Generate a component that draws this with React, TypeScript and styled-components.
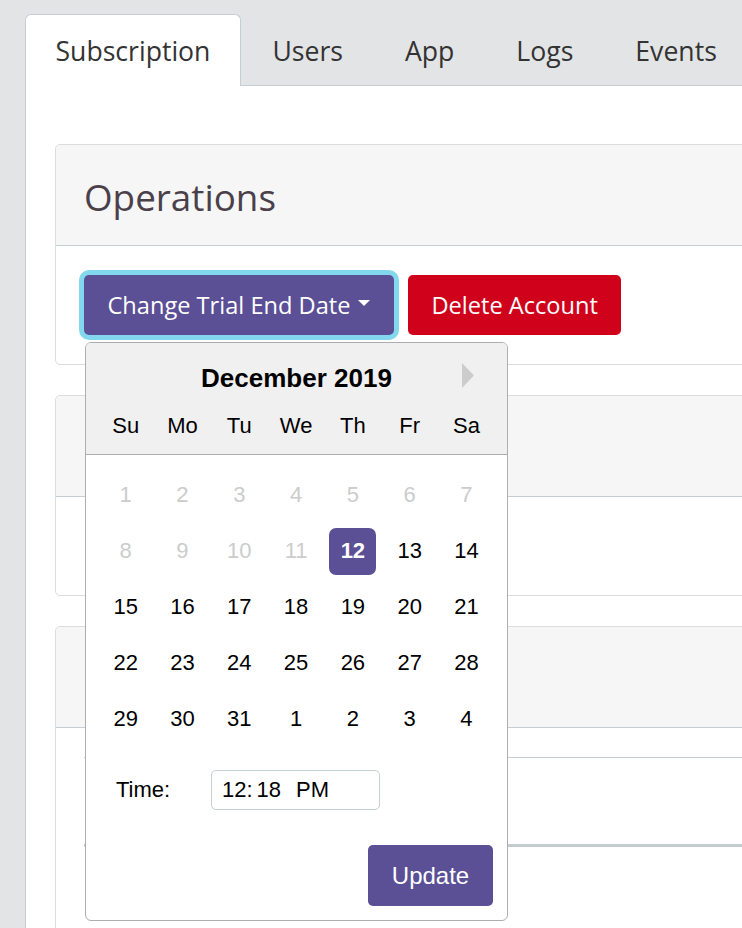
import React from 'react';
import styled, { createGlobalStyle } from 'styled-components';

const GlobalStyle = createGlobalStyle`
  html, body { margin: 0; padding: 0; }
  body {
    background: #e3e4e6;
    overflow: hidden;
    font-family: "Open Sans", "Noto Sans", sans-serif;
  }
  * { box-sizing: border-box; }
`;

const Page = styled.div`
  padding: 14px 0 0 25px;
  height: 928px;
  display: flex;
  flex-direction: column;
`;

const TabBar = styled.nav`
  display: flex;
  gap: 1px;
  height: 71px;
  position: relative;
  z-index: 1;
`;

const Tab = styled.div<{ $active?: boolean }>`
  display: flex;
  align-items: center;
  height: 72px;
  padding: 0 29.5px;
  font-size: 26.6px;
  color: #333;
  border: 1px solid ${(p) => (p.$active ? '#c6ced3' : 'transparent')};
  border-bottom: none;
  border-radius: 6px 6px 0 0;
  background: ${(p) => (p.$active ? '#fff' : 'transparent')};
`;

const Panel = styled.main`
  flex: 1;
  background: #fff;
  border-top: 1px solid #c6ced3;
  border-left: 1px solid #c6ced3;
  padding: 58px 0 0 29px;
`;

const Card = styled.section<{ $raised?: boolean }>`
  position: relative;
  z-index: ${(p) => (p.$raised ? 2 : 'auto')};
  width: calc(100% + 40px);
  border: 1px solid #dcdcdc;
  border-radius: 5px;
  margin-bottom: 30px;
  background: #fff;
`;

const CardHeader = styled.header`
  height: 101px;
  background: #f6f6f6;
  border-bottom: 1px solid #c6ced3;
  border-radius: 5px 5px 0 0;
  padding: 3px 28px 0;
  display: flex;
  align-items: center;
  font-size: 36.8px;
  color: #4a4049;
`;

const CardBody = styled.div<{ $minHeight?: number }>`
  padding: 29px 28px;
  min-height: ${(p) => (p.$minHeight ? `${p.$minHeight}px` : 'auto')};
`;

const ButtonRow = styled.div`
  display: flex;
  gap: 14px;
`;

const DropdownWrap = styled.div`
  position: relative;
`;

const Button = styled.button<{ $variant: 'primary' | 'danger'; $focused?: boolean }>`
  display: inline-flex;
  align-items: center;
  height: 60px;
  padding: 0 23.5px;
  border: none;
  border-radius: 5px;
  font-family: "Open Sans", "Noto Sans", sans-serif;
  font-size: 23.6px;
  color: #fff;
  background: ${(p) => (p.$variant === 'primary' ? '#5b4f96' : '#d0021b')};
  box-shadow: ${(p) => (p.$focused ? '0 0 0 5px #82d9ee' : 'none')};
  cursor: pointer;
`;

const Caret = styled.span`
  display: inline-block;
  width: 0;
  height: 0;
  margin-left: 8px;
  margin-bottom: 5px;
  border-top: 6px solid #fff;
  border-left: 6px solid transparent;
  border-right: 6px solid transparent;
`;

const Table = styled.div`
  border-top: 1px solid #c6ced3;
`;

const TableHead = styled.div`
  height: 89px;
  border-bottom: 3px solid #c3cbcf;
`;

/* ---------- Datepicker ---------- */

const Calendar = styled.div`
  position: absolute;
  top: calc(100% + 7px);
  left: 1px;
  width: 423px;
  background: #fff;
  border: 1px solid #aeaeae;
  border-radius: 6px;
  font-family: "Liberation Sans", Arial, sans-serif;
  color: #000;
  z-index: 10;
`;

const CalHeader = styled.div`
  position: relative;
  background: #f0f0f0;
  border-bottom: 1px solid #aeaeae;
  border-radius: 5px 5px 0 0;
  padding-top: 20px;
`;

const MonthTitle = styled.div`
  text-align: center;
  font-weight: bold;
  font-size: 26px;
  line-height: 30px;
  margin-bottom: 4px;
`;

const NextArrow = styled.svg`
  position: absolute;
  top: 20px;
  right: 33px;
`;

const DayGrid = styled.div`
  display: grid;
  grid-template-columns: repeat(7, 56.8px);
  padding: 0 11.3px;
`;

const Weeks = styled(DayGrid)`
  padding-top: 12px;
`;

const DayName = styled.div`
  height: 57px;
  display: flex;
  align-items: center;
  justify-content: center;
  font-size: 22px;
`;

const DayCell = styled.div`
  height: 56px;
  display: flex;
  align-items: center;
  justify-content: center;
`;

const DayNum = styled.span<{ $muted?: boolean; $selected?: boolean }>`
  width: 47px;
  height: 47px;
  display: flex;
  align-items: center;
  justify-content: center;
  font-size: 22px;
  border-radius: 7px;
  color: ${(p) => (p.$selected ? '#fff' : p.$muted ? '#cccccc' : '#000')};
  background: ${(p) => (p.$selected ? '#5b4f96' : 'transparent')};
  font-weight: ${(p) => (p.$selected ? 'bold' : 'normal')};
`;

const TimeRow = styled.div`
  display: flex;
  align-items: center;
  margin-top: 23px;
  padding-left: 30px;
  height: 40px;
`;

const TimeLabel = styled.span`
  font-size: 22px;
  width: 95px;
`;

const TimeInput = styled.div`
  width: 169px;
  height: 40px;
  border: 1px solid #c4d0d4;
  border-radius: 5px;
  display: flex;
  align-items: center;
  padding-left: 10px;
  font-size: 22px;
`;

const TimeSeg = styled.span<{ $gap: number }>`
  margin-left: ${(p) => p.$gap}px;
`;

const FooterRow = styled.div`
  display: flex;
  justify-content: flex-end;
  padding: 35px 14px 14px;
`;

const UpdateButton = styled.button`
  width: 125px;
  height: 61px;
  border: none;
  border-radius: 5px;
  background: #5b4f96;
  color: #fff;
  font-family: "Liberation Sans", Arial, sans-serif;
  font-size: 24px;
  cursor: pointer;
`;

const dayNames = ['Su', 'Mo', 'Tu', 'We', 'Th', 'Fr', 'Sa'];
const days: { n: number; muted?: boolean; selected?: boolean }[] = [
  ...[1, 2, 3, 4, 5, 6, 7, 8, 9, 10, 11].map((n) => ({ n, muted: true })),
  { n: 12, selected: true },
  ...Array.from({ length: 19 }, (_, i) => ({ n: 13 + i })),
  { n: 1 }, { n: 2 }, { n: 3 }, { n: 4 },
];

const tabs = ['Subscription', 'Users', 'App', 'Logs', 'Events'];

export default function App() {
  return (
    <>
      <GlobalStyle />
      <Page>
        <TabBar>
          {tabs.map((t, i) => (
            <Tab key={t} $active={i === 0}>{t}</Tab>
          ))}
        </TabBar>
        <Panel>
          <Card $raised>
            <CardHeader>Operations</CardHeader>
            <CardBody>
              <ButtonRow>
                <DropdownWrap>
                  <Button $variant="primary" $focused>
                    Change Trial End Date<Caret />
                  </Button>
                  <Calendar>
                    <CalHeader>
                      <MonthTitle>December 2019</MonthTitle>
                      <NextArrow width="12" height="25" viewBox="0 0 12 25">
                        <polygon points="0,0 12,12.5 0,25" fill="#cccccc" />
                      </NextArrow>
                      <DayGrid>
                        {dayNames.map((d) => (
                          <DayName key={d}>{d}</DayName>
                        ))}
                      </DayGrid>
                    </CalHeader>
                    <Weeks>
                      {days.map((d, i) => (
                        <DayCell key={i}>
                          <DayNum $muted={d.muted} $selected={d.selected}>{d.n}</DayNum>
                        </DayCell>
                      ))}
                    </Weeks>
                    <TimeRow>
                      <TimeLabel>Time:</TimeLabel>
                      <TimeInput>
                        12:<TimeSeg $gap={4}>18</TimeSeg><TimeSeg $gap={15}>PM</TimeSeg>
                      </TimeInput>
                    </TimeRow>
                    <FooterRow>
                      <UpdateButton>Update</UpdateButton>
                    </FooterRow>
                  </Calendar>
                </DropdownWrap>
                <Button $variant="danger">Delete Account</Button>
              </ButtonRow>
            </CardBody>
          </Card>
          <Card>
            <CardHeader />
            <CardBody $minHeight={98} />
          </Card>
          <Card>
            <CardHeader />
            <CardBody $minHeight={300}>
              <Table>
                <TableHead />
              </Table>
            </CardBody>
          </Card>
        </Panel>
      </Page>
    </>
  );
}
